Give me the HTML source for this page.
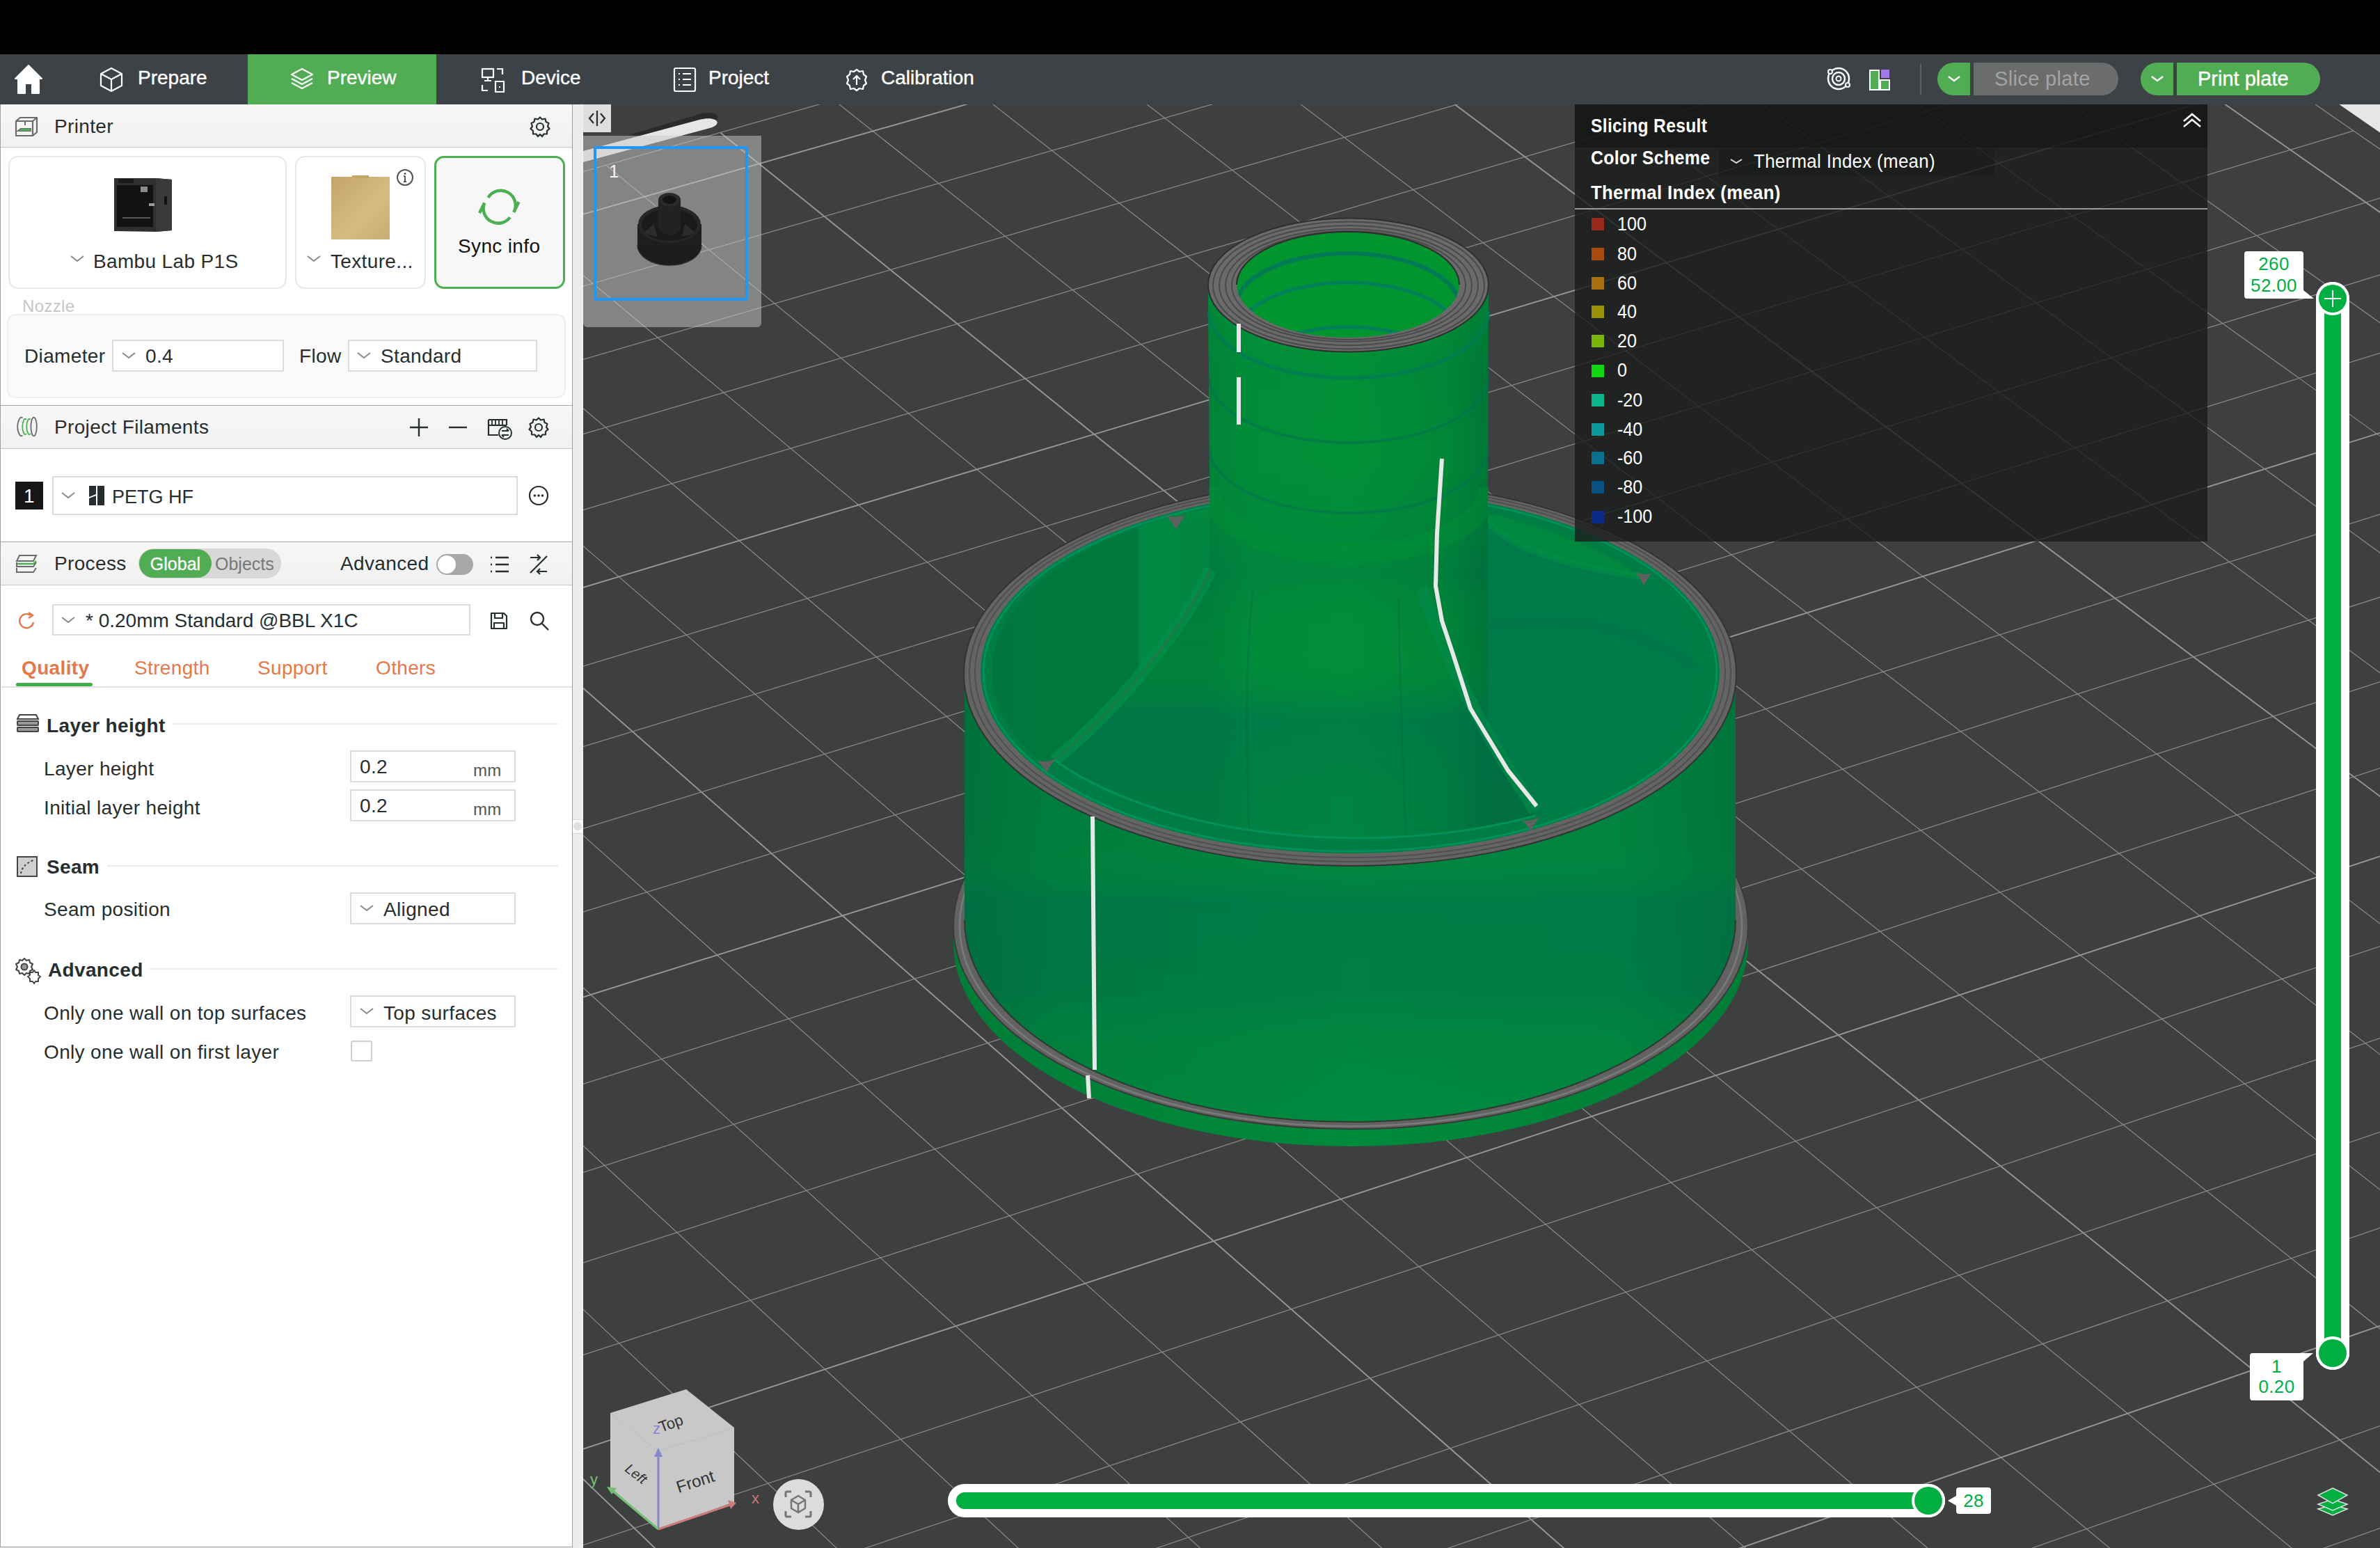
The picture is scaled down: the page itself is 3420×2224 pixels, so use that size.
<!DOCTYPE html>
<html><head><meta charset="utf-8">
<style>
html,body{margin:0;padding:0;}
body{width:3420px;height:2224px;overflow:hidden;position:relative;background:#000;font-family:"Liberation Sans",sans-serif;color:#262e30;}
.a{position:absolute;}
.t{position:absolute;white-space:nowrap;line-height:40px;height:40px;font-size:28px;letter-spacing:0.35px;}
.tab{color:#fff;font-size:28px;-webkit-text-stroke:0.4px #fff;letter-spacing:0;}
.hdr{position:absolute;left:1px;width:821px;background:linear-gradient(#f7f7f7,#f1f1f1);border-bottom:1px solid #c6c6c6;border-top:1px solid #a6a6a6;box-sizing:border-box;}
.combo{position:absolute;border:2px solid #dcdcdc;background:#fff;box-sizing:border-box;}
.chev{position:absolute;width:20px;height:12px;}
.gm{stroke:#8a8c8c;stroke-width:1.2;}
.gM{stroke:#969898;stroke-width:1.9;}
.lg{position:absolute;left:2287px;width:18px;height:18px;}
.lt{position:absolute;left:2324px;color:#fff;font-size:27px;transform:scaleX(0.93);transform-origin:0 50%;line-height:40px;height:40px;white-space:nowrap;}
.orange{color:#e4784b;}
.icon{position:absolute;overflow:visible;}
</style></head>
<body>
<!-- top black bar -->
<div class="a" style="left:0;top:0;width:3420px;height:78px;background:#000"></div>
<!-- tab bar -->
<div class="a" style="left:0;top:78px;width:3420px;height:72px;background:#3c4245"></div>
<div class="a" style="left:356px;top:78px;width:271px;height:72px;background:#50ad54"></div>
<!-- home icon -->
<svg class="icon" style="left:0;top:78px" width="80" height="72" viewBox="0 0 80 72">
  <path d="M41,16 L60,35 L56,35 L56,56 L46,56 L46,42 L36,42 L36,56 L26,56 L26,35 L22,35 Z" fill="#fff" stroke="#fff" stroke-width="2" stroke-linejoin="round"/>
</svg>
<!-- prepare cube icon -->
<svg class="icon" style="left:140px;top:94px" width="40" height="40" viewBox="0 0 40 40">
  <path d="M20,4 L35,12 L35,29 L20,37 L5,29 L5,12 Z M5,12 L20,20 L35,12 M20,20 L20,37" fill="none" stroke="#fff" stroke-width="2.2" stroke-linejoin="round"/>
</svg>
<div class="t tab" style="left:198px;top:92px">Prepare</div>
<!-- preview layers icon -->
<svg class="icon" style="left:414px;top:96px" width="40" height="40" viewBox="0 0 40 40">
  <path d="M20,3 L35,11 L20,19 L5,11 Z" fill="none" stroke="#fff" stroke-width="2.2" stroke-linejoin="round"/>
  <path d="M5,17 L20,25 L35,17" fill="none" stroke="#fff" stroke-width="2.2" stroke-linejoin="round"/>
  <path d="M5,23 L20,31 L35,23" fill="none" stroke="#fff" stroke-width="2.2" stroke-linejoin="round"/>
</svg>
<div class="t tab" style="left:470px;top:92px">Preview</div>
<!-- device icon -->
<svg class="icon" style="left:690px;top:96px" width="40" height="40" viewBox="0 0 40 40">
  <rect x="3" y="3" width="16" height="12" fill="none" stroke="#fff" stroke-width="2.2"/>
  <path d="M11,15 L11,20 M6,20 L16,20 M24,3 L32,3 L32,11 M3,26 L3,34 L11,34 M22,21 L34,21 L34,36 L22,36 Z M27,29 L29,29" fill="none" stroke="#fff" stroke-width="2.2"/>
</svg>
<div class="t tab" style="left:749px;top:92px">Device</div>
<!-- project icon -->
<svg class="icon" style="left:965px;top:95px" width="40" height="40" viewBox="0 0 40 40">
  <rect x="4" y="3" width="30" height="33" rx="2" fill="none" stroke="#fff" stroke-width="2.2"/>
  <path d="M10,11 L12,11 M16,11 L28,11 M10,19 L12,19 M16,19 L28,19 M10,27 L12,27 M16,27 L28,27" stroke="#fff" stroke-width="2.2"/>
</svg>
<div class="t tab" style="left:1018px;top:92px">Project</div>
<!-- calibration icon -->
<svg class="icon" style="left:1211px;top:95px" width="40" height="40" viewBox="0 0 40 40">
  <path d="M20,5 L24,8 L29,7 L30,12 L34,15 L32,20 L34,25 L30,28 L29,33 L24,32 L20,35 L16,32 L11,33 L10,28 L6,25 L8,20 L6,15 L10,12 L11,7 L16,8 Z" fill="none" stroke="#fff" stroke-width="2.2" stroke-linejoin="round"/>
  <path d="M20,27 L20,14 M15,19 L20,14 L25,19" fill="none" stroke="#fff" stroke-width="2.2"/>
</svg>
<div class="t tab" style="left:1266px;top:92px">Calibration</div>

<!-- right side of tab bar -->
<svg class="icon" style="left:2618px;top:89px" width="48" height="48" viewBox="0 0 48 48">
  <circle cx="24" cy="24" r="15" fill="none" stroke="#fff" stroke-width="2.5"/>
  <circle cx="24" cy="24" r="9" fill="none" stroke="#fff" stroke-width="2.5"/>
  <circle cx="24" cy="24" r="3.5" fill="none" stroke="#fff" stroke-width="2"/>
  <circle cx="12" cy="14" r="3" fill="#3c4245" stroke="#fff" stroke-width="2"/>
  <circle cx="37" cy="33" r="3" fill="#3c4245" stroke="#fff" stroke-width="2"/>
</svg>
<svg class="icon" style="left:2684px;top:98px" width="34" height="34" viewBox="0 0 34 34">
  <rect x="3" y="3" width="13" height="28" fill="#50ad54" stroke="#fff" stroke-width="2"/>
  <rect x="18" y="17" width="13" height="14" fill="#50ad54" stroke="#fff" stroke-width="2"/>
  <rect x="19" y="2" width="12" height="12" fill="#a07ae8"/>
</svg>
<div class="a" style="left:2759px;top:92px;width:2px;height:43px;background:#5a6064"></div>
<div class="a" style="left:2784px;top:90px;width:47px;height:47px;background:#50ad54;border-radius:23.5px 0 0 23.5px"></div>
<svg class="icon" style="left:2796px;top:104px" width="24" height="18" viewBox="0 0 24 18"><path d="M4,6 L12,12 L20,6" fill="none" stroke="#fff" stroke-width="2.4"/></svg>
<div class="a" style="left:2836px;top:90px;width:208px;height:47px;background:#6b6c6c;border-radius:0 23.5px 23.5px 0"></div>
<div class="t" style="left:2866px;top:93px;color:#a4a4a4;font-size:29px">Slice plate</div>
<div class="a" style="left:3076px;top:90px;width:47px;height:47px;background:#50ad54;border-radius:23.5px 0 0 23.5px"></div>
<svg class="icon" style="left:3088px;top:104px" width="24" height="18" viewBox="0 0 24 18"><path d="M4,6 L12,12 L20,6" fill="none" stroke="#fff" stroke-width="2.4"/></svg>
<div class="a" style="left:3128px;top:90px;width:206px;height:47px;background:#50ad54;border-radius:0 23.5px 23.5px 0"></div>
<div class="t tab" style="left:3158px;top:93px;font-size:29px">Print plate</div>

<!-- ================= VIEWPORT ================= -->
<svg class="a" style="left:0;top:0" width="3420" height="2224" viewBox="0 0 3420 2224">
  <defs><clipPath id="vp"><rect x="838" y="150" width="2582" height="2074"/></clipPath></defs>
  <g clip-path="url(#vp)">
    <rect x="838" y="150" width="2582" height="2074" fill="#3e4040"/>
    <g>
<line class="gm" x1="2698.9" y1="-284.0" x2="5589.0" y2="1712.8"/>
<line class="gM" x1="2610.5" y1="-258.8" x2="5491.9" y2="1748.0"/>
<line class="gm" x1="2458.4" y1="-215.4" x2="5324.7" y2="1808.7"/>
<line class="gm" x1="2305.2" y1="-171.7" x2="5156.0" y2="1869.8"/>
<line class="gm" x1="2150.8" y1="-127.7" x2="4985.8" y2="1931.6"/>
<line class="gm" x1="1995.2" y1="-83.3" x2="4813.9" y2="1993.9"/>
<line class="gM" x1="1838.3" y1="-38.6" x2="4640.5" y2="2056.8"/>
<line class="gm" x1="1680.2" y1="6.5" x2="4465.4" y2="2120.3"/>
<line class="gm" x1="1520.9" y1="51.9" x2="4288.7" y2="2184.4"/>
<line class="gm" x1="1360.2" y1="97.7" x2="4110.3" y2="2249.2"/>
<line class="gm" x1="1198.3" y1="143.9" x2="3930.2" y2="2314.5"/>
<line class="gM" x1="1035.2" y1="190.4" x2="3748.3" y2="2380.4"/>
<line class="gm" x1="870.7" y1="237.3" x2="3564.8" y2="2447.0"/>
<line class="gm" x1="704.8" y1="284.6" x2="3379.4" y2="2514.2"/>
<line class="gm" x1="537.7" y1="332.3" x2="3192.3" y2="2582.1"/>
<line class="gm" x1="369.1" y1="380.3" x2="3003.3" y2="2650.7"/>
<line class="gM" x1="199.2" y1="428.8" x2="2812.5" y2="2719.9"/>
<line class="gm" x1="27.9" y1="477.6" x2="2619.8" y2="2789.8"/>
<line class="gm" x1="-144.8" y1="526.8" x2="2425.2" y2="2860.3"/>
<line class="gm" x1="-319.0" y1="576.5" x2="2228.6" y2="2931.6"/>
<line class="gm" x1="-494.6" y1="626.6" x2="2030.1" y2="3003.6"/>
<line class="gM" x1="-671.6" y1="677.0" x2="1829.6" y2="3076.4"/>
<line class="gm" x1="-850.2" y1="728.0" x2="1627.1" y2="3149.8"/>
<line class="gm" x1="2698.9" y1="-284.0" x2="-1030.2" y2="779.3"/>
<line class="gM" x1="2758.6" y1="-242.7" x2="-980.4" y2="828.9"/>
<line class="gm" x1="2859.2" y1="-173.2" x2="-896.5" y2="912.6"/>
<line class="gm" x1="2961.0" y1="-102.9" x2="-811.3" y2="997.5"/>
<line class="gm" x1="3064.2" y1="-31.6" x2="-725.0" y2="1083.5"/>
<line class="gm" x1="3168.7" y1="40.6" x2="-637.4" y2="1170.8"/>
<line class="gM" x1="3274.6" y1="113.8" x2="-548.5" y2="1259.4"/>
<line class="gm" x1="3381.9" y1="187.9" x2="-458.4" y2="1349.2"/>
<line class="gm" x1="3490.6" y1="263.0" x2="-366.9" y2="1440.4"/>
<line class="gm" x1="3600.8" y1="339.2" x2="-274.1" y2="1532.9"/>
<line class="gm" x1="3712.5" y1="416.3" x2="-179.9" y2="1626.8"/>
<line class="gM" x1="3825.7" y1="494.5" x2="-84.3" y2="1722.1"/>
<line class="gm" x1="3940.4" y1="573.8" x2="12.8" y2="1818.9"/>
<line class="gm" x1="4056.7" y1="654.2" x2="111.3" y2="1917.1"/>
<line class="gm" x1="4174.7" y1="735.6" x2="211.3" y2="2016.8"/>
<line class="gm" x1="4294.2" y1="818.3" x2="312.9" y2="2118.1"/>
<line class="gM" x1="4415.5" y1="902.1" x2="416.1" y2="2220.9"/>
<line class="gm" x1="4538.5" y1="987.0" x2="520.9" y2="2325.4"/>
<line class="gm" x1="4663.2" y1="1073.2" x2="627.4" y2="2431.5"/>
<line class="gm" x1="4789.8" y1="1160.6" x2="735.5" y2="2539.3"/>
<line class="gm" x1="4918.2" y1="1249.3" x2="845.4" y2="2648.8"/>
<line class="gM" x1="5048.4" y1="1339.3" x2="957.1" y2="2760.1"/>
<line class="gm" x1="5180.6" y1="1430.6" x2="1070.6" y2="2873.3"/>
<line class="gm" x1="5314.7" y1="1523.3" x2="1186.0" y2="2988.3"/>
<line class="gm" x1="5450.8" y1="1617.4" x2="1303.3" y2="3105.2"/>
    </g>
    <polygon fill="#e6e6e6" points="2584.6,-385.6 5614.6,1703.5 6305.3,1453.0 3212.6,-562.5"/>
    <!-- plate handle -->
    <path d="M903,194 L1005,164 C1022,159 1036,164 1030,172 L960,200 Z" fill="#2a2c2c"/>
    <path d="M838,217 L1005,172 C1030,166 1040,178 1020,184 L838,233 Z" fill="#e6e6e6"/>
<defs>
  <linearGradient id="wallG" x1="1385" y1="0" x2="2495" y2="0" gradientUnits="userSpaceOnUse">
    <stop offset="0" stop-color="#00703a"/>
    <stop offset="0.12" stop-color="#007c3c"/>
    <stop offset="0.5" stop-color="#00853f"/>
    <stop offset="0.85" stop-color="#00823f"/>
    <stop offset="1" stop-color="#00733a"/>
  </linearGradient>
  <linearGradient id="wallV" x1="0" y1="968" x2="0" y2="1620" gradientUnits="userSpaceOnUse">
    <stop offset="0" stop-color="#00a050" stop-opacity="0"/>
    <stop offset="0.38" stop-color="#00a040" stop-opacity="0.05"/>
    <stop offset="0.5" stop-color="#006a55" stop-opacity="0.3"/>
    <stop offset="0.7" stop-color="#006a55" stop-opacity="0.25"/>
    <stop offset="0.85" stop-color="#00a040" stop-opacity="0.1"/>
    <stop offset="1" stop-color="#00a040" stop-opacity="0.2"/>
  </linearGradient>
  <linearGradient id="flG" x1="1370" y1="0" x2="2512" y2="0" gradientUnits="userSpaceOnUse">
    <stop offset="0" stop-color="#007e38"/>
    <stop offset="0.5" stop-color="#008a3a"/>
    <stop offset="1" stop-color="#007e38"/>
  </linearGradient>
  <linearGradient id="tubeG" x1="1736" y1="0" x2="2139" y2="0" gradientUnits="userSpaceOnUse">
    <stop offset="0" stop-color="#007e3a"/>
    <stop offset="0.15" stop-color="#008a3a"/>
    <stop offset="0.5" stop-color="#008e38"/>
    <stop offset="0.85" stop-color="#008338"/>
    <stop offset="1" stop-color="#007038"/>
  </linearGradient>
  <linearGradient id="tubeV" x1="0" y1="410" x2="0" y2="1240" gradientUnits="userSpaceOnUse">
    <stop offset="0" stop-color="#00a030" stop-opacity="0.35"/>
    <stop offset="0.15" stop-color="#00a030" stop-opacity="0.1"/>
    <stop offset="0.3" stop-color="#00a030" stop-opacity="0.15"/>
    <stop offset="0.5" stop-color="#006a50" stop-opacity="0.2"/>
    <stop offset="0.62" stop-color="#00a030" stop-opacity="0.05"/>
    <stop offset="0.75" stop-color="#006a55" stop-opacity="0.45"/>
    <stop offset="0.88" stop-color="#006a55" stop-opacity="0.3"/>
    <stop offset="1" stop-color="#006a55" stop-opacity="0.25"/>
  </linearGradient>
  <linearGradient id="holeG" x1="0" y1="333" x2="0" y2="485" gradientUnits="userSpaceOnUse">
    <stop offset="0" stop-color="#009432"/>
    <stop offset="0.35" stop-color="#007a48"/>
    <stop offset="0.45" stop-color="#009632"/>
    <stop offset="1" stop-color="#008c3a"/>
  </linearGradient>
</defs>
<!-- flange -->
<ellipse cx="1941" cy="1355" rx="571" ry="292" fill="url(#flG)"/>
<rect x="1370" y="1330" width="1142" height="25" fill="url(#flG)"/>
<ellipse cx="1941" cy="1330" rx="571" ry="292" fill="#626262"/>
<ellipse cx="1941" cy="1330" rx="571" ry="292" fill="none" stroke="#3a3a3a" stroke-width="2"/>
<ellipse cx="1941" cy="1330" rx="562" ry="288" fill="none" stroke="#7a7a7a" stroke-width="2.5"/>
<!-- wall -->
<path d="M1386,968 L1386,1322 A554,290 0 0 0 2494,1322 L2494,968 Z" fill="url(#wallG)"/>
<path d="M1386,968 L1386,1322 A554,290 0 0 0 2494,1322 L2494,968 Z" fill="url(#wallV)"/>
<path d="M1386,1322 A554,290 0 0 0 2494,1322" fill="none" stroke="#2e3a30" stroke-width="2"/>
<!-- rim -->
<ellipse cx="1940" cy="968" rx="555" ry="276" fill="#646464"/>
<ellipse cx="1940" cy="968" rx="555" ry="276" fill="none" stroke="#333" stroke-width="2"/>
<ellipse cx="1940" cy="967" rx="547" ry="271" fill="none" stroke="#4e4e4e" stroke-width="2"/>
<ellipse cx="1940" cy="966" rx="539" ry="266" fill="none" stroke="#505050" stroke-width="2"/>
<!-- interior -->
<ellipse cx="1940" cy="965" rx="531" ry="261" fill="#007d44"/>
<linearGradient id="leftG" x1="1410" y1="0" x2="1740" y2="0" gradientUnits="userSpaceOnUse">
  <stop offset="0" stop-color="#00763c"/>
  <stop offset="0.68" stop-color="#007a3c"/>
  <stop offset="0.695" stop-color="#008a42"/>
  <stop offset="1" stop-color="#008440"/>
</linearGradient>
<!-- back compartment -->
<path d="M1682,742 A531,261 0 0 1 2357,828 C2290,818 2190,800 2139,752 L1739,752 Z" fill="#00883e"/>
<!-- left compartment -->
<path d="M1682,742 A531,261 0 0 0 1501,1100 L1515,1092 C1600,1025 1700,905 1739,819 L1739,752 Z" fill="url(#leftG)"/>
<!-- right compartment -->
<path d="M2357,828 A531,261 0 0 1 2196,1180 L2206,1172 C2180,1110 2150,1070 2137,1047 L2139,752 C2190,800 2290,818 2357,828 Z" fill="#007a48"/>
<path d="M2139,752 C2190,800 2290,818 2357,828" fill="none" stroke="#009048" stroke-width="10" opacity="0.6"/>
<path d="M2139,900 C2250,880 2350,900 2440,960" fill="none" stroke="#006e50" stroke-width="14" opacity="0.25"/>
<ellipse cx="1940" cy="965" rx="527" ry="258" fill="none" stroke="#00905a" stroke-width="3"/>
<!-- rib junctions -->
<g fill="#606060">
  <path d="M1676,740 Q1690,745 1704,740 Q1696,750 1690,760 Q1684,750 1676,740 Z"/>
  <path d="M1490,1092 Q1502,1097 1518,1090 Q1508,1100 1504,1110 Q1498,1100 1490,1092 Z"/>
  <path d="M2186,1178 Q2198,1181 2212,1174 Q2204,1184 2200,1194 Q2194,1184 2186,1178 Z"/>
  <path d="M2350,822 Q2362,828 2374,823 Q2366,832 2362,842 Q2358,832 2350,822 Z"/>
</g>
<!-- tube + flare -->
<path d="M1736,410 L1739,819 C1700,905 1600,1025 1515,1092 A531,261 0 0 0 2206,1172 C2180,1110 2150,1070 2137,1047 L2139,410 Z" fill="url(#tubeG)"/>
<path d="M1736,410 L1739,819 C1700,905 1600,1025 1515,1092 A531,261 0 0 0 2206,1172 C2180,1110 2150,1070 2137,1047 L2139,410 Z" fill="url(#tubeV)"/>
<clipPath id="tubeClip"><rect x="1737" y="400" width="402" height="430"/></clipPath>
<g opacity="0.55" clip-path="url(#tubeClip)">
<path d="M1737,540 A201,96 0 0 0 2139,540" fill="none" stroke="#007050" stroke-width="4"/>
<path d="M1737,641 A201,96 0 0 0 2139,641" fill="none" stroke="#007050" stroke-width="4"/>
<path d="M1737,700 A201,96 0 0 0 2139,700" fill="none" stroke="#009a30" stroke-width="30" opacity="0.5"/>
</g>
<!-- flare striped edges -->
<path d="M1739,819 C1700,905 1600,1025 1515,1092" fill="none" stroke="#00904a" stroke-width="18" opacity="0.7"/>
<path d="M1739,819 C1700,905 1600,1025 1515,1092" fill="none" stroke="#3a6a4a" stroke-width="2" opacity="0.8"/>
<path d="M2043,845 C2080,960 2150,1080 2206,1165" fill="none" stroke="#008a48" stroke-width="18" opacity="0.7"/>
<path d="M1800,850 C1790,950 1790,1050 1795,1200" fill="none" stroke="#006a48" stroke-width="3" opacity="0.4"/>
<path d="M2010,860 C2010,950 2015,1050 2020,1200" fill="none" stroke="#006a48" stroke-width="3" opacity="0.4"/>
<!-- inner front rim -->
<path d="M1515,1092 A531,261 0 0 0 2206,1172" fill="none" stroke="#00925a" stroke-width="3"/>
<!-- tube top -->
<ellipse cx="1937.5" cy="409.5" rx="201.5" ry="96" fill="#6a6a6a"/>
<ellipse cx="1937.5" cy="409.5" rx="201.5" ry="96" fill="none" stroke="#2e2e2e" stroke-width="2"/>
<ellipse cx="1938" cy="410" rx="195" ry="91.5" fill="none" stroke="#4a4a4a" stroke-width="2"/>
<ellipse cx="1938" cy="410" rx="186" ry="86" fill="none" stroke="#4a4a4a" stroke-width="2"/>
<ellipse cx="1938" cy="410" rx="177" ry="81" fill="none" stroke="#4a4a4a" stroke-width="2"/>
<ellipse cx="1938" cy="410" rx="168" ry="78" fill="none" stroke="#4a4a4a" stroke-width="2"/>
<clipPath id="holeClip"><ellipse cx="1937" cy="409" rx="160" ry="76"/></clipPath>
<ellipse cx="1937" cy="409" rx="160" ry="76" fill="#00952f"/>
<g clip-path="url(#holeClip)">
  <ellipse cx="1937" cy="440" rx="160" ry="76" fill="none" stroke="#007a55" stroke-width="6"/>
  <ellipse cx="1937" cy="482" rx="160" ry="76" fill="none" stroke="#00805a" stroke-width="5"/>
  <ellipse cx="1937" cy="546" rx="160" ry="76" fill="none" stroke="#00805a" stroke-width="5"/>
</g>
<path d="M1777,409 A160,76 0 0 1 2097,409" fill="none" stroke="#2e2e2e" stroke-width="2"/>
<path d="M1737,447 A201,96 0 0 0 2139,447" fill="none" stroke="#007a55" stroke-width="5" opacity="0.8"/>
<!-- seams -->
<path d="M1570,1173 L1573,1537" stroke="#e8e8e8" stroke-width="6" fill="none"/>
<path d="M1563,1545 L1565,1578" stroke="#e8e8e8" stroke-width="6" fill="none"/>
<path d="M2072,659 L2065,766 L2063,842 L2072,892 L2088,940 L2113,1018 L2167,1107 L2208,1158" stroke="#e8e8e8" stroke-width="6" fill="none" stroke-linejoin="round"/>
<path d="M1780,465 L1780,506 M1780,542 L1780,610" stroke="#e8e8e8" stroke-width="6" fill="none"/>

  </g>
</svg>

<!-- collapse button -->
<div class="a" style="left:838px;top:150px;width:40px;height:40px;background:#dedede"></div>
<svg class="icon" style="left:838px;top:150px" width="40" height="40" viewBox="0 0 40 40">
  <path d="M15,13 L9,20 L15,27 M25,13 L31,20 L25,27 M20,9 L20,31" fill="none" stroke="#262e30" stroke-width="2.2"/>
</svg>
<!-- thumbnail -->
<div class="a" style="left:838px;top:195px;width:256px;height:275px;background:rgba(200,200,200,0.5);border-radius:0 0 6px 6px"></div>
<div class="a" style="left:853px;top:210px;width:222px;height:222px;border:4px solid #2196f3;border-radius:4px;box-sizing:border-box"></div>
<div class="t" style="left:875px;top:226px;color:#f4f4f4;font-size:26px">1</div>
<svg class="icon" style="left:900px;top:260px" width="130" height="130" viewBox="900 260 130 130">
  <ellipse cx="962" cy="352" rx="46" ry="29" fill="#1c1c1c"/>
  <rect x="916" y="322" width="92" height="30" fill="#1e1e1e"/>
  <ellipse cx="962" cy="322" rx="45" ry="27" fill="#262626"/>
  <ellipse cx="962" cy="323" rx="40" ry="23" fill="#1a1a1a"/>
  <path d="M924,335 L940,322 L944,340 Z M1000,335 L984,322 L980,340 Z" fill="#2c2c2c"/>
  <path d="M946,288 L946,330 Q962,345 978,330 L978,288 Z" fill="#222"/>
  <ellipse cx="962" cy="287" rx="16" ry="10" fill="#2a2a2a"/>
  <ellipse cx="962" cy="287" rx="10" ry="6" fill="#141414"/>
  <path d="M916,352 A46,29 0 0 0 1008,352" fill="none" stroke="#2a2a2a" stroke-width="1.5"/>
</svg>

<!-- slicing result legend -->
<div class="a" style="left:2263px;top:150px;width:909px;height:62px;background:rgba(20,21,21,0.9)"></div>
<div class="a" style="left:2263px;top:212px;width:909px;height:566px;background:rgba(26,27,27,0.8)"></div>
<div class="t" style="left:2286px;top:161px;color:#fff;font-size:28px;font-weight:bold;transform:scaleX(0.88);transform-origin:0 50%">Slicing Result</div>
<svg class="icon" style="left:3134px;top:158px" width="32" height="32" viewBox="0 0 32 32"><path d="M4,16 L16,6 L28,16 M4,24 L16,14 L28,24" fill="none" stroke="#fff" stroke-width="2.5"/></svg>
<div class="t" style="left:2286px;top:207px;color:#fff;font-size:28px;font-weight:bold;transform:scaleX(0.89);transform-origin:0 50%">Color Scheme</div>
<div class="a" style="left:2470px;top:213px;width:396px;height:40px;background:rgba(0,0,0,0.15)"></div>
<svg class="icon" style="left:2484px;top:226px" width="22" height="12" viewBox="0 0 22 12"><path d="M3,3 L11,8 L19,3" fill="none" stroke="#ddd" stroke-width="2"/></svg>
<div class="t" style="left:2520px;top:212px;color:#fff;font-size:28px;transform:scaleX(0.924);transform-origin:0 50%">Thermal Index (mean)</div>
<div class="t" style="left:2286px;top:257px;color:#fff;font-size:28px;font-weight:bold;transform:scaleX(0.92);transform-origin:0 50%">Thermal Index (mean)</div>
<div class="a" style="left:2263px;top:299px;width:909px;height:2px;background:#9a9a9a"></div>
<div class="lg" style="top:313px;background:#9a2a1c"></div>
<div class="lt" style="top:302px">100</div>
<div class="lg" style="top:356px;background:#a84a0c"></div>
<div class="lt" style="top:345px">80</div>
<div class="lg" style="top:398px;background:#a8700e"></div>
<div class="lt" style="top:387px">60</div>
<div class="lg" style="top:439px;background:#9a9206"></div>
<div class="lt" style="top:428px">40</div>
<div class="lg" style="top:481px;background:#7ab60a"></div>
<div class="lt" style="top:470px">20</div>
<div class="lg" style="top:524px;background:#12d814"></div>
<div class="lt" style="top:512px">0</div>
<div class="lg" style="top:566px;background:#0ab68a"></div>
<div class="lt" style="top:555px">-20</div>
<div class="lg" style="top:608px;background:#0a9a9e"></div>
<div class="lt" style="top:597px">-40</div>
<div class="lg" style="top:649px;background:#0a7090"></div>
<div class="lt" style="top:638px">-60</div>
<div class="lg" style="top:691px;background:#0a5284"></div>
<div class="lt" style="top:680px">-80</div>
<div class="lg" style="top:734px;background:#0c2a8a"></div>
<div class="lt" style="top:722px">-100</div>

<!-- vertical slider -->
<div class="a" style="left:3328px;top:405px;width:48px;height:1563px;background:#fff;border-radius:24px"></div>
<div class="a" style="left:3340px;top:430px;width:24px;height:1500px;background:#00ae42"></div>
<div class="a" style="left:3328px;top:405px;width:48px;height:48px;border-radius:24px;background:#fff"></div>
<div class="a" style="left:3332px;top:409px;width:40px;height:40px;border-radius:20px;background:#00ae42"></div>
<svg class="icon" style="left:3332px;top:409px" width="40" height="40" viewBox="0 0 40 40"><path d="M8,20 L32,20 M20,8 L20,32" stroke="#fff" stroke-width="2"/></svg>
<div class="a" style="left:3328px;top:1920px;width:48px;height:48px;border-radius:24px;background:#fff"></div>
<div class="a" style="left:3332px;top:1924px;width:40px;height:40px;border-radius:20px;background:#00ae42"></div>
<!-- top label -->
<svg class="icon" style="left:3225px;top:361px" width="100" height="70" viewBox="0 0 100 70"><path d="M4,0 L81,0 Q85,0 85,4 L85,56 L100,68 L4,68 Q0,68 0,64 L0,4 Q0,0 4,0 Z" fill="#fff"/></svg>
<div class="t" style="left:3225px;top:361px;width:85px;text-align:center;color:#00ae42;font-size:26px;line-height:30px;height:30px;top:364px">260</div>
<div class="t" style="left:3225px;top:395px;width:85px;text-align:center;color:#00ae42;font-size:26px;line-height:30px;height:30px">52.00</div>
<!-- bottom label -->
<svg class="icon" style="left:3233px;top:1944px" width="92" height="68" viewBox="0 0 92 68"><path d="M4,0 L91,0 L77,12 L77,64 Q77,68 73,68 L4,68 Q0,68 0,64 L0,4 Q0,0 4,0 Z" fill="#fff"/></svg>
<div class="t" style="left:3233px;top:1948px;width:77px;text-align:center;color:#00ae42;font-size:26px;line-height:30px;height:30px">1</div>
<div class="t" style="left:3233px;top:1977px;width:77px;text-align:center;color:#00ae42;font-size:26px;line-height:30px;height:30px">0.20</div>
<!-- layers icon -->
<svg class="icon" style="left:3328px;top:2134px" width="48" height="46" viewBox="0 0 48 46">
  <path d="M24,28 L45,34 L24,43 L3,34 Z" fill="#00ae42" stroke="#e0e0e0" stroke-width="1.5"/>
  <path d="M24,20 L45,27 L24,36 L3,27 Z" fill="#00ae42" stroke="#e0e0e0" stroke-width="1.5"/>
  <path d="M24,4 L45,14 L24,26 L3,14 Z" fill="#00ae42" stroke="#e0e0e0" stroke-width="1.5"/>
</svg>

<!-- horizontal slider -->
<div class="a" style="left:1362px;top:2132px;width:1433px;height:48px;background:#fff;border-radius:24px"></div>
<div class="a" style="left:1374px;top:2144px;width:1400px;height:24px;background:#00ae42;border-radius:12px 0 0 12px"></div>
<div class="a" style="left:2747px;top:2132px;width:48px;height:48px;border-radius:24px;background:#fff"></div>
<div class="a" style="left:2751px;top:2136px;width:40px;height:40px;border-radius:20px;background:#00ae42"></div>
<svg class="icon" style="left:2799px;top:2137px" width="63" height="38" viewBox="0 0 63 38"><path d="M0,19 L12,12 L12,4 Q12,0 16,0 L58,0 Q62,0 62,4 L62,34 Q62,38 58,38 L16,38 Q12,38 12,34 L12,26 Z" fill="#fff"/></svg>
<div class="t" style="left:2811px;top:2141px;width:50px;text-align:center;color:#00ae42;font-size:26px;line-height:30px;height:30px">28</div>

<!-- view cube -->
<svg class="icon" style="left:838px;top:1980px" width="400" height="244" viewBox="838 1980 400 244">
  <path d="M877,2030 L986,1996 L1055,2051 L1055,2158 L946,2197 L877,2137 Z" fill="#c8c8c8"/>
  <path d="M877,2030 L946,2085 L1055,2051" fill="none" stroke="#bdbdbd" stroke-width="1"/>
  <path d="M946,2085 L946,2197" stroke="#bdbdbd" stroke-width="1"/>
  <text x="0" y="0" font-size="22" fill="#333" transform="translate(950,2058) rotate(-20)">Top</text>
  <text x="0" y="0" font-size="20" fill="#333" transform="translate(896,2112) rotate(38) skewX(-10)">Left</text>
  <text x="0" y="0" font-size="24" fill="#333" transform="translate(975,2145) rotate(-18)">Front</text>
  <path d="M946,2197 L946,2092" stroke="#8686cc" stroke-width="3"/>
  <path d="M940,2093 L946,2080 L952,2093 Z" fill="#8686cc"/>
  <text x="938" y="2060" font-size="22" fill="#8686cc">z</text>
  <path d="M946,2197 L878,2140" stroke="#74c074" stroke-width="3"/>
  <path d="M872,2136 L886,2138 L879,2147 Z" fill="#74c074"/>
  <text x="848" y="2133" font-size="22" fill="#74c074">y</text>
  <path d="M946,2197 L1055,2160" stroke="#cc7a7a" stroke-width="3"/>
  <path d="M1058,2159 L1046,2155 L1050,2168 Z" fill="#cc7a7a"/>
  <text x="1080" y="2160" font-size="22" fill="#cc7a7a">x</text>
</svg>
<div class="a" style="left:1111px;top:2125px;width:73px;height:73px;border-radius:50%;background:#dcdcdc"></div>
<svg class="icon" style="left:1123px;top:2137px" width="48" height="48" viewBox="0 0 48 48">
  <path d="M6,14 L6,8 Q6,6 8,6 L14,6 M34,6 L40,6 Q42,6 42,8 L42,14 M42,34 L42,40 Q42,42 40,42 L34,42 M14,42 L8,42 Q6,42 6,40 L6,34" fill="none" stroke="#757575" stroke-width="3"/>
  <path d="M24,12 L34,18 L34,30 L24,36 L14,30 L14,18 Z M14,18 L24,24 L34,18 M24,24 L24,36" fill="none" stroke="#757575" stroke-width="2.5" stroke-linejoin="round"/>
</svg>

<!-- ================= LEFT PANEL ================= -->
<div class="a" style="left:0;top:150px;width:838px;height:2074px;background:#ececec"></div>
<div class="a" style="left:0;top:150px;width:823px;height:2073px;background:#fff;border-left:1px solid #a0a0a0;border-right:1px solid #a0a0a0;border-bottom:1px solid #a0a0a0;box-sizing:border-box"></div>
<div class="a" style="left:837px;top:150px;width:1px;height:2074px;background:#f8f8f8"></div>
<div class="a" style="left:823px;top:1177px;width:14px;height:19px;background:#fbfbfb;border-top:1px solid #d6d6d6;border-bottom:1px solid #d6d6d6"></div>
<div class="a" style="left:824px;top:1181px;width:12px;height:12px;border-radius:6px;background:#e0e0e0"></div>
<!-- printer header -->
<div class="hdr" style="top:150px;height:62px;border-top:none"></div>
<svg class="icon" style="left:20px;top:166px" width="36" height="32" viewBox="0 0 36 32">
  <path d="M3,8 L9,3 L33,3 L33,24 L27,29 L3,29 Z M3,8 L27,8 L27,29 M27,8 L33,3" fill="none" stroke="#6b6b6b" stroke-width="2.2" stroke-linejoin="round"/>
  <path d="M16,8 L16,14 M6,22 L10,19 L24,19 L24,22 Z" fill="none" stroke="#6b6b6b" stroke-width="2"/>
  <path d="M7,22 L11,19 L24,19 L24,22 Z" fill="#50ad54"/>
</svg>
<div class="t" style="left:78px;top:162px">Printer</div>
<svg class="icon" style="left:760px;top:166px" width="32" height="32" viewBox="0 0 32 32">
  <path d="M16,2.5 L19,5.5 L23.5,4.5 L24.5,9 L28.5,11 L27,15.5 L29.5,19 L26,22 L26,26.5 L21.5,26.5 L19,30 L16,27 L13,30 L10.5,26.5 L6,26.5 L6,22 L2.5,19 L5,15.5 L3.5,11 L7.5,9 L8.5,4.5 L13,5.5 Z" fill="none" stroke="#262e30" stroke-width="2.2" stroke-linejoin="round"/>
  <circle cx="16" cy="16" r="5" fill="none" stroke="#262e30" stroke-width="2.2"/>
</svg>
<!-- cards -->
<div class="a" style="left:12px;top:224px;width:400px;height:191px;border:2px solid #e8e8e8;border-radius:14px;box-sizing:border-box;background:#fff"></div>
<svg class="icon" style="left:150px;top:240px" width="110" height="110" viewBox="150 240 110 110">
  <path d="M164,256 L224,256 L247,258 L247,331 L224,333 L164,332 Z" fill="#2f2f2f"/>
  <path d="M224,256 L247,258 L247,331 L224,333 Z" fill="#3a3a3a"/>
  <rect x="168" y="266" width="52" height="60" fill="#121212"/>
  <rect x="170" y="257" width="22" height="6" fill="#1a1a1a"/>
  <rect x="202" y="268" width="10" height="8" fill="#8a8a8a"/>
  <rect x="176" y="312" width="40" height="2" fill="#5a5a5a"/>
  <rect x="214" y="292" width="8" height="4" fill="#9a9a9a"/>
  <rect x="236" y="282" width="4" height="12" fill="#111"/>
</svg>
<svg class="chev" style="left:101px;top:366px" viewBox="0 0 20 12"><path d="M1,2 L10,9 L19,2" fill="none" stroke="#8a8a8a" stroke-width="2"/></svg>
<div class="t" style="left:134px;top:356px">Bambu Lab P1S</div>
<div class="a" style="left:424px;top:224px;width:188px;height:191px;border:2px solid #e8e8e8;border-radius:14px;box-sizing:border-box;background:#fff"></div>
<div class="a" style="left:476px;top:254px;width:84px;height:90px;background:linear-gradient(135deg,#c4a468,#d6bc82 60%,#c9ab70)"></div>
<div class="a" style="left:506px;top:252px;width:24px;height:4px;background:#c4a468"></div>
<svg class="icon" style="left:568px;top:241px" width="28" height="28" viewBox="0 0 28 28">
  <circle cx="14" cy="14" r="11" fill="none" stroke="#555" stroke-width="2"/>
  <path d="M14,12 L14,20 M12,20 L16,20 M12,12 L14,12" stroke="#555" stroke-width="2"/>
  <circle cx="14" cy="8.5" r="1.5" fill="#555"/>
</svg>
<svg class="chev" style="left:441px;top:366px" viewBox="0 0 20 12"><path d="M1,2 L10,9 L19,2" fill="none" stroke="#8a8a8a" stroke-width="2"/></svg>
<div class="t" style="left:475px;top:356px">Texture...</div>
<div class="a" style="left:624px;top:224px;width:188px;height:191px;border:3px solid #4caf50;border-radius:14px;box-sizing:border-box;background:#f7f7f7"></div>
<svg class="icon" style="left:670px;top:260px" width="100" height="80" viewBox="670 260 100 80">
  <path d="M701.5,283.8 A21.2,21.2 0 0 1 738.2,305 L745.5,290" fill="none" stroke="#4caf50" stroke-width="4.4" stroke-linejoin="miter"/>
  <path d="M732.8,312.2 A21.2,21.2 0 0 1 696.2,291.5 L689,306" fill="none" stroke="#4caf50" stroke-width="4.4" stroke-linejoin="miter"/>
</svg>
<div class="t" style="left:658px;top:334px;color:#111">Sync info</div>
<!-- nozzle -->
<div class="t" style="left:32px;top:420px;color:#c6c6c6;font-size:24px">Nozzle</div>
<div class="a" style="left:10px;top:451px;width:803px;height:121px;border:2px solid #efefef;border-radius:12px;box-sizing:border-box;background:#fafafa"></div>
<div class="t" style="left:35px;top:492px">Diameter</div>
<div class="combo" style="left:161px;top:488px;width:247px;height:46px"></div>
<svg class="chev" style="left:175px;top:505px" viewBox="0 0 20 12"><path d="M1,2 L10,9 L19,2" fill="none" stroke="#8a8a8a" stroke-width="2"/></svg>
<div class="t" style="left:209px;top:492px">0.4</div>
<div class="t" style="left:430px;top:492px">Flow</div>
<div class="combo" style="left:500px;top:488px;width:272px;height:46px"></div>
<svg class="chev" style="left:513px;top:505px" viewBox="0 0 20 12"><path d="M1,2 L10,9 L19,2" fill="none" stroke="#8a8a8a" stroke-width="2"/></svg>
<div class="t" style="left:547px;top:492px">Standard</div>

<!-- project filaments header -->
<div class="hdr" style="top:582px;height:63px"></div>
<svg class="icon" style="left:20px;top:594px" width="40" height="40" viewBox="20 594 40 40">
  <path d="M32.5,600.5 Q30,598.5 28.5,601 Q25.2,606 25.2,613 Q25.2,620 28.5,625 Q30,627.5 32.5,625.5" fill="none" stroke="#6b6b6b" stroke-width="1.8"/>
  <path d="M38,603 Q36,600.5 34.5,603 Q32.2,607 32.2,613 Q32.2,619 34.5,623 Q36,625.5 38,623" fill="none" stroke="#4caf50" stroke-width="1.8"/>
  <path d="M43.8,603 Q42,600.5 40.5,603 Q38.2,607 38.2,613 Q38.2,619 40.5,623 Q42,625.5 43.8,623" fill="none" stroke="#4caf50" stroke-width="1.8"/>
  <ellipse cx="48.6" cy="613" rx="4.2" ry="13.3" fill="none" stroke="#6b6b6b" stroke-width="1.8"/>
</svg>
<div class="t" style="left:78px;top:594px">Project Filaments</div>
<svg class="icon" style="left:586px;top:598px" width="32" height="32" viewBox="0 0 32 32"><path d="M16,3 L16,29 M3,16 L29,16" stroke="#262e30" stroke-width="2.4"/></svg>
<svg class="icon" style="left:642px;top:598px" width="32" height="32" viewBox="0 0 32 32"><path d="M3,16 L29,16" stroke="#262e30" stroke-width="2.4"/></svg>
<svg class="icon" style="left:698px;top:597px" width="40" height="36" viewBox="0 0 40 36">
  <path d="M4,6 L30,6 L30,14 M4,6 L4,28 L18,28" fill="none" stroke="#262e30" stroke-width="2.2"/>
  <path d="M9,6 L9,14 M14,6 L14,14 M19,6 L19,14 M24,6 L24,14 M4,14 L30,14" stroke="#262e30" stroke-width="1.8"/>
  <circle cx="28" cy="25" r="9" fill="#f4f4f4" stroke="#262e30" stroke-width="2"/>
  <path d="M23,22 L33,22 M30,19 L33,22 M23,28 L33,28 M23,28 L26,31" fill="none" stroke="#262e30" stroke-width="1.8"/>
</svg>
<svg class="icon" style="left:758px;top:598px" width="32" height="32" viewBox="0 0 32 32">
  <path d="M16,2.5 L19,5.5 L23.5,4.5 L24.5,9 L28.5,11 L27,15.5 L29.5,19 L26,22 L26,26.5 L21.5,26.5 L19,30 L16,27 L13,30 L10.5,26.5 L6,26.5 L6,22 L2.5,19 L5,15.5 L3.5,11 L7.5,9 L8.5,4.5 L13,5.5 Z" fill="none" stroke="#262e30" stroke-width="2.2" stroke-linejoin="round"/>
  <circle cx="16" cy="16" r="5" fill="none" stroke="#262e30" stroke-width="2.2"/>
</svg>
<!-- filament row -->
<div class="a" style="left:22px;top:692px;width:40px;height:40px;background:#161616"></div>
<div class="t" style="left:22px;top:693px;width:40px;text-align:center;color:#fff;font-size:28px">1</div>
<div class="combo" style="left:75px;top:684px;width:669px;height:56px"></div>
<svg class="chev" style="left:88px;top:706px" viewBox="0 0 20 12"><path d="M1,2 L10,9 L19,2" fill="none" stroke="#8a8a8a" stroke-width="2"/></svg>
<svg class="icon" style="left:128px;top:698px" width="22" height="28" viewBox="0 0 22 28"><path d="M0,0 L10,0 L10,12 L0,16 Z M12,0 L22,0 L22,28 L12,28 Z M0,18 L10,14 L10,28 L0,28 Z" fill="#262e30"/></svg>
<div class="t" style="left:161px;top:694px;letter-spacing:0;font-size:27px">PETG HF</div>
<svg class="icon" style="left:758px;top:696px" width="32" height="32" viewBox="0 0 32 32">
  <circle cx="16" cy="16" r="13" fill="none" stroke="#262e30" stroke-width="2.2"/>
  <circle cx="10.5" cy="16" r="1.8" fill="#262e30"/><circle cx="16" cy="16" r="1.8" fill="#262e30"/><circle cx="21.5" cy="16" r="1.8" fill="#262e30"/>
</svg>

<!-- process header -->
<div class="hdr" style="top:778px;height:63px"></div>
<svg class="icon" style="left:20px;top:794px" width="36" height="32" viewBox="0 0 36 32">
  <path d="M8,4 L32,4 L28,12 L4,12 Z" fill="none" stroke="#6b6b6b" stroke-width="2"/>
  <path d="M4,16 L28,16 L32,12" fill="none" stroke="#50ad54" stroke-width="2.4"/>
  <path d="M4,14 L4,20 L28,20 L32,14 M4,22 L4,28 L28,28 L32,22" fill="none" stroke="#6b6b6b" stroke-width="2"/>
</svg>
<div class="t" style="left:78px;top:790px">Process</div>
<div class="a" style="left:199px;top:788px;width:205px;height:43px;border-radius:22px;background:#d8d8d8"></div>
<div class="a" style="left:200px;top:789px;width:104px;height:41px;border-radius:21px;background:#50ad54"></div>
<div class="t" style="left:200px;top:790px;width:104px;text-align:center;color:#fff;font-size:25px;letter-spacing:0;-webkit-text-stroke:0.3px #fff">Global</div>
<div class="t" style="left:309px;top:790px;color:#777;font-size:25px;letter-spacing:0">Objects</div>
<div class="t" style="left:489px;top:790px">Advanced</div>
<div class="a" style="left:627px;top:796px;width:53px;height:30px;border-radius:15px;background:#a8a8a8"></div>
<div class="a" style="left:629px;top:798px;width:26px;height:26px;border-radius:13px;background:#fff"></div>
<svg class="icon" style="left:702px;top:795px" width="32" height="32" viewBox="0 0 32 32">
  <path d="M3,6 L5,6 M10,6 L29,6 M3,16 L5,16 M10,16 L29,16 M3,26 L5,26 M10,26 L29,26" stroke="#262e30" stroke-width="2.4"/>
</svg>
<svg class="icon" style="left:758px;top:795px" width="32" height="32" viewBox="0 0 32 32">
  <path d="M4,28 L28,4 M4,6 L18,6 M14,2 L18,6 L14,10 M14,26 L28,26 M18,22 L14,26 L18,30" fill="none" stroke="#262e30" stroke-width="2.2"/>
</svg>
<!-- preset row -->
<svg class="icon" style="left:22px;top:876px" width="32" height="32" viewBox="0 0 32 32">
  <path d="M26,18 A10,10 0 1 1 22,8" fill="none" stroke="#e4784b" stroke-width="2.4"/>
  <path d="M19,4 L25,8 L19,12" fill="none" stroke="#e4784b" stroke-width="2.4"/>
</svg>
<div class="combo" style="left:75px;top:868px;width:601px;height:45px"></div>
<svg class="chev" style="left:88px;top:885px" viewBox="0 0 20 12"><path d="M1,2 L10,9 L19,2" fill="none" stroke="#8a8a8a" stroke-width="2"/></svg>
<div class="t" style="left:123px;top:872px;letter-spacing:0">* 0.20mm Standard @BBL X1C</div>
<svg class="icon" style="left:703px;top:878px" width="28" height="28" viewBox="0 0 28 28">
  <path d="M3,3 L21,3 L25,7 L25,25 L3,25 Z M8,3 L8,10 L19,10 L19,3 M7,25 L7,17 L21,17 L21,25" fill="none" stroke="#262e30" stroke-width="2.2" stroke-linejoin="round"/>
</svg>
<svg class="icon" style="left:759px;top:876px" width="32" height="32" viewBox="0 0 32 32">
  <circle cx="13" cy="13" r="9" fill="none" stroke="#262e30" stroke-width="2.4"/>
  <path d="M20,20 L29,29" stroke="#262e30" stroke-width="2.4"/>
</svg>
<!-- tabs -->
<div class="t orange" style="left:31px;top:940px;font-weight:bold">Quality</div>
<div class="t orange" style="left:193px;top:940px">Strength</div>
<div class="t orange" style="left:370px;top:940px">Support</div>
<div class="t orange" style="left:540px;top:940px">Others</div>
<div class="a" style="left:23px;top:981px;width:110px;height:5px;border-radius:3px;background:#3fae4a"></div>
<div class="a" style="left:2px;top:986px;width:820px;height:2px;background:#e2e2e2"></div>

<!-- layer height group -->
<svg class="icon" style="left:22px;top:1024px" width="36" height="32" viewBox="0 0 36 32">
  <path d="M6,3 L30,3 L33,9 L3,9 Z" fill="#fff" stroke="#444" stroke-width="2"/>
  <rect x="3" y="12" width="30" height="6" rx="1" fill="#999" stroke="#444" stroke-width="2"/>
  <rect x="3" y="21" width="30" height="6" rx="1" fill="#999" stroke="#444" stroke-width="2"/>
</svg>
<div class="t" style="left:67px;top:1023px;font-weight:bold">Layer height</div>
<div class="a" style="left:248px;top:1039px;width:554px;height:2px;background:#ececec"></div>
<div class="t" style="left:63px;top:1085px">Layer height</div>
<div class="combo" style="left:503px;top:1078px;width:238px;height:46px"></div>
<div class="t" style="left:517px;top:1082px">0.2</div>
<div class="t" style="left:680px;top:1087px;font-size:24px;color:#555">mm</div>
<div class="t" style="left:63px;top:1141px">Initial layer height</div>
<div class="combo" style="left:503px;top:1134px;width:238px;height:46px"></div>
<div class="t" style="left:517px;top:1138px">0.2</div>
<div class="t" style="left:680px;top:1143px;font-size:24px;color:#555">mm</div>

<!-- seam group -->
<svg class="icon" style="left:22px;top:1228px" width="34" height="34" viewBox="0 0 34 34">
  <rect x="3" y="3" width="28" height="28" fill="#cfcfcf" stroke="#444" stroke-width="2"/>
  <path d="M8,27 Q10,14 26,8" fill="none" stroke="#444" stroke-width="2" stroke-dasharray="3,3"/>
</svg>
<div class="t" style="left:67px;top:1226px;font-weight:bold">Seam</div>
<div class="a" style="left:154px;top:1243px;width:648px;height:2px;background:#ececec"></div>
<div class="t" style="left:63px;top:1287px">Seam position</div>
<div class="combo" style="left:503px;top:1282px;width:238px;height:46px"></div>
<svg class="chev" style="left:517px;top:1299px" viewBox="0 0 20 12"><path d="M1,2 L10,9 L19,2" fill="none" stroke="#8a8a8a" stroke-width="2"/></svg>
<div class="t" style="left:551px;top:1287px">Aligned</div>

<!-- advanced group -->
<svg class="icon" style="left:20px;top:1374px" width="40" height="40" viewBox="0 0 40 40">
  <path d="M15,3 L18,6 L22,5 L23,9 L27,11 L25,15 L27,19 L23,21 L22,25 L18,24 L15,27 L12,24 L8,25 L7,21 L3,19 L5,15 L3,11 L7,9 L8,5 L12,6 Z" fill="none" stroke="#444" stroke-width="2" stroke-linejoin="round"/>
  <circle cx="15" cy="15" r="4.5" fill="#999" stroke="#444" stroke-width="2"/>
  <path d="M29,20 L31,23 L35,23 L35,27 L38,29 L35,32 L35,36 L31,36 L29,39 L27,36 L23,36 L23,32 L20,29 L23,27 L23,23 L27,23 Z" fill="#fff" stroke="#444" stroke-width="2" stroke-linejoin="round"/>
</svg>
<div class="t" style="left:69px;top:1374px;font-weight:bold">Advanced</div>
<div class="a" style="left:214px;top:1391px;width:588px;height:2px;background:#ececec"></div>
<div class="t" style="left:63px;top:1436px">Only one wall on top surfaces</div>
<div class="combo" style="left:503px;top:1430px;width:238px;height:46px"></div>
<svg class="chev" style="left:517px;top:1447px" viewBox="0 0 20 12"><path d="M1,2 L10,9 L19,2" fill="none" stroke="#8a8a8a" stroke-width="2"/></svg>
<div class="t" style="left:551px;top:1436px">Top surfaces</div>
<div class="t" style="left:63px;top:1492px">Only one wall on first layer</div>
<div class="a" style="left:504px;top:1495px;width:31px;height:30px;border:2px solid #cfcfcf;border-radius:3px;box-sizing:border-box;background:#fff"></div>

</body></html>
